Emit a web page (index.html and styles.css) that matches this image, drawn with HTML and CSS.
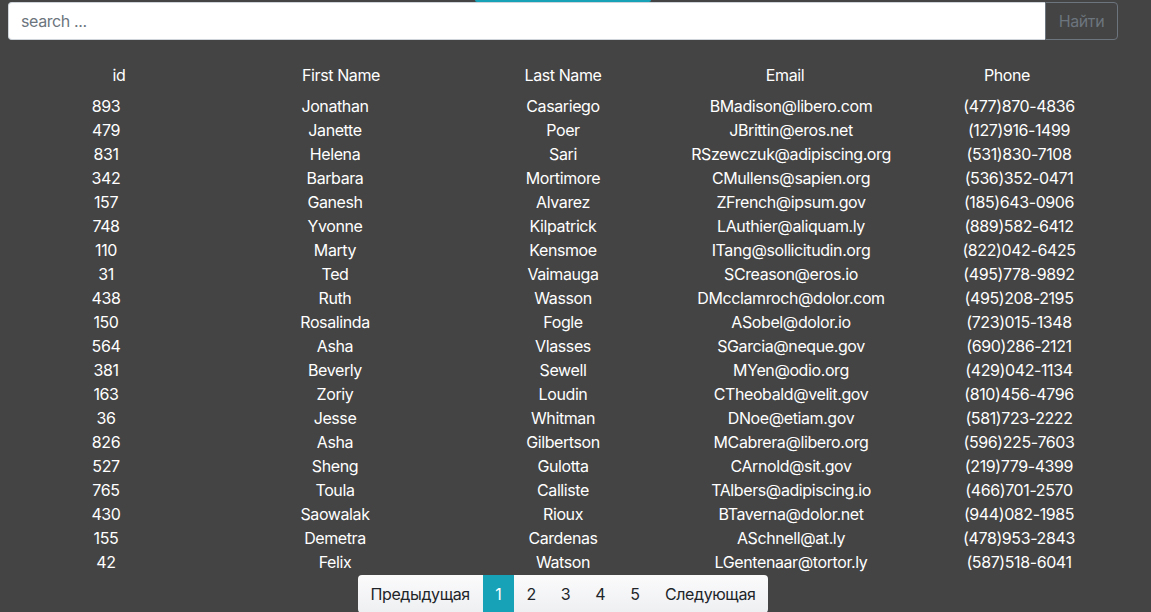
FILE: index.html
```html
<!DOCTYPE html>
<html>
<head>
<meta charset="utf-8">
<link rel="stylesheet" href="styles.css">
</head>
<body>
<div class="topbar"></div>
<div class="container">
  <form class="search">
    <input class="search-input" type="text" placeholder="search ...">
    <button class="search-btn" type="button">Найти</button>
  </form>
  <div class="thead">
    <div>id</div><div>First Name</div><div>Last Name</div><div>Email</div><div>Phone</div>
  </div>
  <div class="tbody">
    <div class="row"><div>893</div><div>Jonathan</div><div>Casariego</div><div>BMadison@libero.com</div><div>(477)870-4836</div></div>
    <div class="row"><div>479</div><div>Janette</div><div>Poer</div><div>JBrittin@eros.net</div><div>(127)916-1499</div></div>
    <div class="row"><div>831</div><div>Helena</div><div>Sari</div><div>RSzewczuk@adipiscing.org</div><div>(531)830-7108</div></div>
    <div class="row"><div>342</div><div>Barbara</div><div>Mortimore</div><div>CMullens@sapien.org</div><div>(536)352-0471</div></div>
    <div class="row"><div>157</div><div>Ganesh</div><div>Alvarez</div><div>ZFrench@ipsum.gov</div><div>(185)643-0906</div></div>
    <div class="row"><div>748</div><div>Yvonne</div><div>Kilpatrick</div><div>LAuthier@aliquam.ly</div><div>(889)582-6412</div></div>
    <div class="row"><div>110</div><div>Marty</div><div>Kensmoe</div><div>ITang@sollicitudin.org</div><div>(822)042-6425</div></div>
    <div class="row"><div>31</div><div>Ted</div><div>Vaimauga</div><div>SCreason@eros.io</div><div>(495)778-9892</div></div>
    <div class="row"><div>438</div><div>Ruth</div><div>Wasson</div><div>DMcclamroch@dolor.com</div><div>(495)208-2195</div></div>
    <div class="row"><div>150</div><div>Rosalinda</div><div>Fogle</div><div>ASobel@dolor.io</div><div>(723)015-1348</div></div>
    <div class="row"><div>564</div><div>Asha</div><div>Vlasses</div><div>SGarcia@neque.gov</div><div>(690)286-2121</div></div>
    <div class="row"><div>381</div><div>Beverly</div><div>Sewell</div><div>MYen@odio.org</div><div>(429)042-1134</div></div>
    <div class="row"><div>163</div><div>Zoriy</div><div>Loudin</div><div>CTheobald@velit.gov</div><div>(810)456-4796</div></div>
    <div class="row"><div>36</div><div>Jesse</div><div>Whitman</div><div>DNoe@etiam.gov</div><div>(581)723-2222</div></div>
    <div class="row"><div>826</div><div>Asha</div><div>Gilbertson</div><div>MCabrera@libero.org</div><div>(596)225-7603</div></div>
    <div class="row"><div>527</div><div>Sheng</div><div>Gulotta</div><div>CArnold@sit.gov</div><div>(219)779-4399</div></div>
    <div class="row"><div>765</div><div>Toula</div><div>Calliste</div><div>TAlbers@adipiscing.io</div><div>(466)701-2570</div></div>
    <div class="row"><div>430</div><div>Saowalak</div><div>Rioux</div><div>BTaverna@dolor.net</div><div>(944)082-1985</div></div>
    <div class="row"><div>155</div><div>Demetra</div><div>Cardenas</div><div>ASchnell@at.ly</div><div>(478)953-2843</div></div>
    <div class="row"><div>42</div><div>Felix</div><div>Watson</div><div>LGentenaar@tortor.ly</div><div>(587)518-6041</div></div>
  </div>
  <nav class="pager">
    <ul class="pagination">
      <li class="page">Предыдущая</li>
      <li class="page num active">1</li>
      <li class="page num">2</li>
      <li class="page num">3</li>
      <li class="page num">4</li>
      <li class="page num">5</li>
      <li class="page">Следующая</li>
    </ul>
  </nav>
</div>
</body>
</html>
```

FILE: styles.css
```css
html, body {
  margin: 0;
  padding: 0;
  background: #444444;
  height: 100%;
  overflow: hidden;
}
body {
  font-family: Inter, "Noto Sans", "Liberation Sans", sans-serif;
  font-size: 16px;
  letter-spacing: -0.4px;
  color: #ffffff;
  position: relative;
}
.topbar {
  position: absolute;
  left: 475px;
  top: 0;
  width: 176px;
  height: 2px;
  background: #17a2b8;
  border-radius: 0 0 3px 3px;
}
.container {
  width: 1110px;
  margin-left: 8px;
  padding-top: 2px;
}
.search {
  display: flex;
  margin: 0;
  height: 38px;
}
.search-input {
  flex: 1;
  box-sizing: border-box;
  height: 38px;
  border: 1px solid #ced4da;
  border-right: none;
  border-radius: 4px 0 0 4px;
  padding: 0 12px;
  font-family: inherit;
  font-size: 16px;
  letter-spacing: -0.4px;
  color: #495057;
  background: #fff;
  outline: none;
}
.search-input::placeholder {
  color: #6c757d;
}
.search-btn {
  box-sizing: border-box;
  width: 73px;
  height: 38px;
  border: 1px solid #6c757d;
  border-radius: 0 4px 4px 0;
  background: transparent;
  color: #6c757d;
  font-family: inherit;
  font-size: 16px;
  letter-spacing: -0.4px;
  padding: 0;
}
.thead {
  display: grid;
  grid-template-columns: repeat(5, 222px);
  margin-top: 23px;
  height: 24px;
  line-height: 24px;
  text-align: center;
}
.tbody {
  margin-top: 7px;
}
.row {
  display: grid;
  grid-template-columns: 196px 262px 194px 262px 194px;
  height: 24px;
  line-height: 24px;
  text-align: center;
  white-space: nowrap;
}
.pager {
  display: flex;
  justify-content: center;
  margin-top: 1px;
}
.pagination {
  display: flex;
  list-style: none;
  margin: 0;
  padding: 0;
  background: linear-gradient(#fbfbfc, #eeeff1);
  border-radius: 4px;
  overflow: hidden;
}
.page {
  height: 38px;
  line-height: 38px;
  padding: 0 13px;
  color: #212529;
}
.num {
  padding: 0 12.5px;
}
.active {
  background: #17a2b8;
  color: #fff;
}
```
